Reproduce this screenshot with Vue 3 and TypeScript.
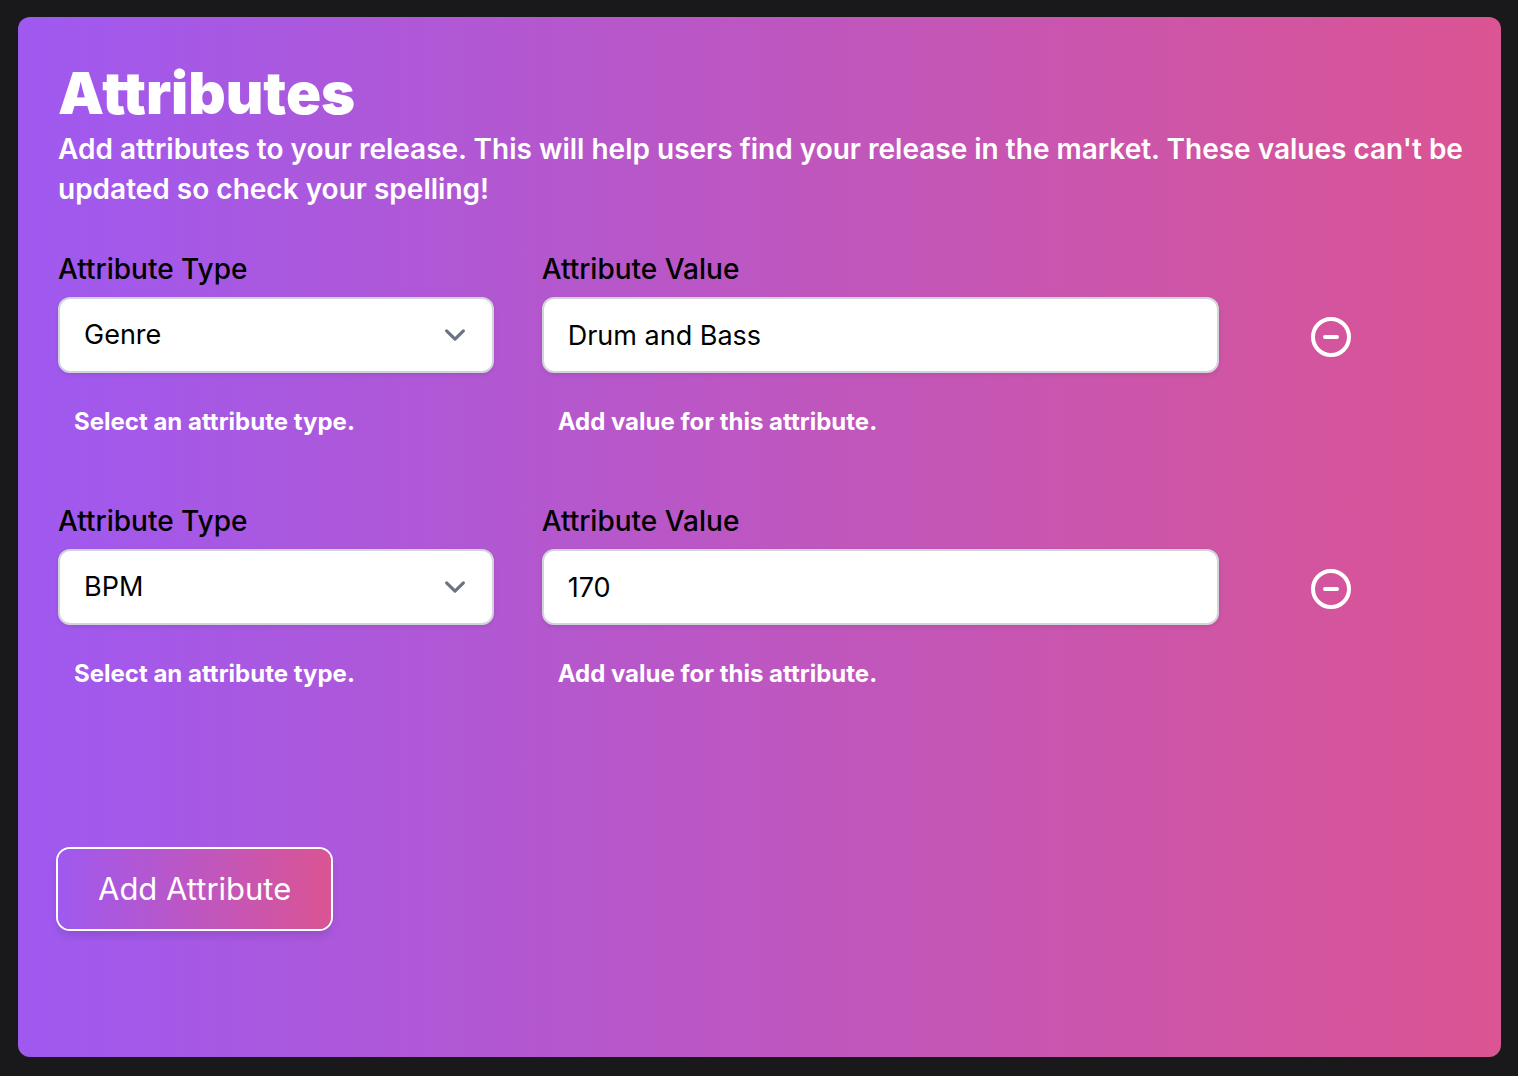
<script setup lang="ts">
import { ref } from 'vue'

interface Attribute {
  id: number
  type: string
  value: string
}

const types: string[] = ['Genre', 'BPM']

const attributes = ref<Attribute[]>([
  { id: 1, type: 'Genre', value: 'Drum and Bass' },
  { id: 2, type: 'BPM', value: '170' },
])

let nextId = 3

function addAttribute(): void {
  attributes.value.push({ id: nextId++, type: 'Genre', value: '' })
}

function removeAttribute(id: number): void {
  attributes.value = attributes.value.filter((a) => a.id !== id)
}
</script>

<template>
  <main class="page">
    <form class="card" @submit.prevent>
      <h1 class="title">Attributes</h1>
      <p class="intro">
        Add attributes to your release. This will help users find your release in the market. These
        values can't be updated so check your spelling!
      </p>

      <div class="rows">
        <div v-for="attribute in attributes" :key="attribute.id" class="row">
          <div class="field field-type">
            <label class="label" :for="`type-${attribute.id}`">Attribute Type</label>
            <div class="select-wrap">
              <select :id="`type-${attribute.id}`" v-model="attribute.type" class="control">
                <option v-for="type in types" :key="type" :value="type">{{ type }}</option>
              </select>
              <svg class="chevron" viewBox="0 0 20 20" fill="none" aria-hidden="true">
                <path
                  d="M6 8l4 4 4-4"
                  stroke="currentColor"
                  stroke-width="1.5"
                  stroke-linecap="round"
                  stroke-linejoin="round"
                />
              </svg>
            </div>
            <p class="hint">Select an attribute type.</p>
          </div>

          <div class="field field-value">
            <label class="label" :for="`value-${attribute.id}`">Attribute Value</label>
            <input
              :id="`value-${attribute.id}`"
              v-model="attribute.value"
              class="control"
              type="text"
            />
            <p class="hint">Add value for this attribute.</p>
          </div>

          <button
            class="remove"
            type="button"
            aria-label="Remove attribute"
            @click="removeAttribute(attribute.id)"
          >
            <svg viewBox="0 0 24 24" fill="none" aria-hidden="true">
              <path
                d="M15 12H9m12 0a9 9 0 11-18 0 9 9 0 0118 0z"
                stroke="currentColor"
                stroke-width="2"
                stroke-linecap="round"
                stroke-linejoin="round"
              />
            </svg>
          </button>
        </div>
      </div>

      <button class="add" type="button" @click="addAttribute">Add Attribute</button>
    </form>
  </main>
</template>

<style>
body {
  background: #19191b;
}
</style>

<style scoped>
.page {
  padding: 17px 17px 19px 18px;
  font-family: Inter, 'Liberation Sans', sans-serif;
}

.card {
  padding: 40px 32px 128px 40px;
  border-radius: 12px;
  background: linear-gradient(to right, #9f59f0, #db5493);
  color: #fff;
}

.title {
  margin: 0;
  font-size: 58px;
  line-height: 72px;
  font-weight: 900;
}

.intro {
  margin: 0;
  font-size: 28px;
  line-height: 40px;
  font-weight: 600;
}

.rows {
  display: flex;
  flex-direction: column;
  gap: 62px;
  margin: 40px 8px 158px 0;
}

.row {
  display: grid;
  grid-template-columns: repeat(6, minmax(0, 1fr));
  column-gap: 48px;
}

.field-type {
  grid-column: span 2;
}

.field-value {
  grid-column: span 3;
}

.label {
  display: block;
  margin-bottom: 8px;
  color: #000;
  font-size: 28px;
  line-height: 40px;
  font-weight: 500;
}

.select-wrap {
  position: relative;
}

.control {
  display: block;
  box-sizing: border-box;
  width: 100%;
  height: 76px;
  margin: 0;
  padding: 16px 24px;
  border: 2px solid #d1d5db;
  border-radius: 12px;
  background: #fff;
  box-shadow: 0 2px 4px rgb(0 0 0 / 8%);
  color: #000;
  font-family: inherit;
  font-size: 27px;
  line-height: 40px;
  appearance: none;
}

.chevron {
  position: absolute;
  top: 17px;
  right: 18px;
  width: 42px;
  height: 42px;
  color: #6b7280;
  pointer-events: none;
}

.hint {
  margin: 32px 0 0;
  padding-left: 16px;
  font-size: 24px;
  line-height: 34px;
  font-weight: 700;
}

.remove {
  justify-self: start;
  width: 48px;
  height: 48px;
  margin: 64px 0 0 40px;
  padding: 0;
  border: 0;
  background: none;
  color: #fff;
  cursor: pointer;
}

.remove svg {
  display: block;
  width: 48px;
  height: 48px;
}

.add {
  display: block;
  padding: 20px 40px;
  border: 0;
  border-radius: 12px;
  background: linear-gradient(to right, #9f59f0, #db5493);
  box-shadow: 0 0 0 2px #fff, 0 6px 10px rgb(0 0 0 / 12%);
  color: #fff;
  font-family: inherit;
  font-size: 31px;
  line-height: 40px;
  cursor: pointer;
}
</style>
